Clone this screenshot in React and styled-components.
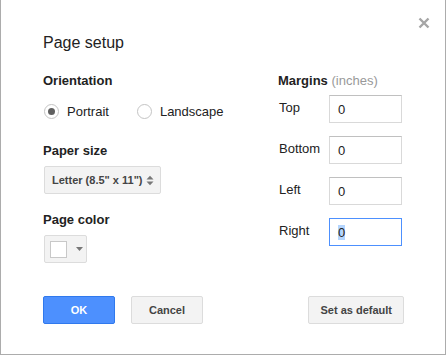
import React from "react";
import styled, { createGlobalStyle } from "styled-components";

const Global = createGlobalStyle`
  html, body { margin: 0; padding: 0; background: #ffffff; }
  body { font-family: "Liberation Sans", Arial, sans-serif; color: #222; }
`;

const Dialog = styled.div`
  position: relative;
  box-sizing: border-box;
  width: 446px;
  height: 355px;
  border: 1px solid #acacac;
  border-top: none;
  background: #fff;
  padding: 33px 41px 0 42px;
  display: flex;
  flex-direction: column;
`;

const Close = styled.button`
  position: absolute;
  top: 17px;
  left: 417px;
  width: 12px;
  height: 12px;
  padding: 0;
  border: none;
  background: transparent;
  display: flex;
  cursor: pointer;
`;

const Title = styled.h1`
  margin: 0;
  font-size: 16px;
  line-height: 20px;
  font-weight: normal;
  color: #222;
`;

const Columns = styled.div`
  display: flex;
  margin-top: 20px;
`;

const LeftCol = styled.div`
  width: 235px;
  display: flex;
  flex-direction: column;
`;

const RightCol = styled.div`
  flex: 1;
  display: flex;
  flex-direction: column;
`;

const Label = styled.div`
  font-size: 13px;
  line-height: 16px;
  font-weight: bold;
  color: #222;
  margin-top: ${(p) => p.$top || 0}px;
`;

const Hint = styled.span`
  font-weight: normal;
  color: #999;
`;

const RadioGroup = styled.div`
  display: flex;
  align-items: center;
  height: 18px;
  margin-top: 13px;
  margin-left: 1px;
  gap: 28px;
`;

const RadioOption = styled.label`
  display: flex;
  align-items: center;
  gap: 8px;
  font-size: 13px;
  color: #222;
`;

const RadioCircle = styled.span`
  box-sizing: border-box;
  width: 15px;
  height: 15px;
  border-radius: 50%;
  border: 1px solid #c4c4c4;
  background: #fff;
  display: flex;
  align-items: center;
  justify-content: center;
  &::after {
    content: "";
    width: 7px;
    height: 7px;
    border-radius: 50%;
    background: ${(p) => (p.$checked ? "#606060" : "transparent")};
  }
`;

const Select = styled.div`
  box-sizing: border-box;
  margin-top: 7px;
  margin-left: 1px;
  width: 117px;
  height: 28px;
  border: 1px solid #dcdcdc;
  border-radius: 2px;
  background: #f3f3f3;
  display: flex;
  align-items: center;
  padding: 0 6px 0 7px;
  justify-content: space-between;
  font-size: 11px;
  font-weight: bold;
  color: #444;
`;

const ColorButton = styled.div`
  box-sizing: border-box;
  margin-top: 7px;
  margin-left: 1px;
  width: 43px;
  height: 28px;
  border: 1px solid #dcdcdc;
  border-radius: 2px;
  background: #f3f3f3;
  display: flex;
  align-items: center;
  padding-left: 5px;
  gap: 9px;
`;

const Swatch = styled.span`
  box-sizing: border-box;
  width: 17px;
  height: 17px;
  border: 1px solid #c8c8c8;
  background: ${(p) => p.$color};
`;

const MarginRow = styled.div`
  display: flex;
  align-items: center;
  margin-top: ${(p) => p.$top}px;
`;

const MarginLabel = styled.div`
  width: 51px;
  font-size: 13px;
  line-height: 16px;
  color: #222;
  padding-left: 1px;
  margin-top: -2px;
`;

const Field = styled.div`
  box-sizing: border-box;
  width: 73px;
  height: 28px;
  margin-left: -1px;
  border: 1px solid ${(p) => (p.$focused ? "#4d90fe" : "#d9d9d9")};
  border-top-color: ${(p) => (p.$focused ? "#4d90fe" : "#c0c0c0")};
  background: #fff;
  display: flex;
  align-items: center;
  padding-left: 8px;
  font-size: 13px;
  color: #222;
`;

const Value = styled.span`
  line-height: 15px;
  background: ${(p) => (p.$selected ? "#b4d5fe" : "transparent")};
`;

const Footer = styled.div`
  display: flex;
  justify-content: space-between;
  margin-top: 33px;
`;

const ButtonGroup = styled.div`
  display: flex;
  gap: 16px;
`;

const Button = styled.button`
  box-sizing: border-box;
  height: 28px;
  min-width: 72px;
  padding: 0 11px;
  border-radius: 2px;
  font-family: "Liberation Sans", Arial, sans-serif;
  font-size: 11px;
  font-weight: bold;
  cursor: pointer;
  border: 1px solid ${(p) => (p.$primary ? "#3079ed" : "#dcdcdc")};
  background: ${(p) => (p.$primary ? "#4d90fe" : "#f3f3f3")};
  color: ${(p) => (p.$primary ? "#fff" : "#444")};
`;

const margins = [
  { name: "Top", top: 6 },
  { name: "Bottom", top: 13 },
  { name: "Left", top: 13 },
  { name: "Right", top: 13, focused: true },
];

export default function App() {
  return (
    <>
      <Global />
      <Dialog>
        <Close aria-label="Close">
          <svg width="12" height="12" viewBox="0 0 12 12">
            <path d="M1.5 1.5 L10.5 10.5 M10.5 1.5 L1.5 10.5" stroke="#a6a6a6" strokeWidth="2.4" />
          </svg>
        </Close>
        <Title>Page setup</Title>
        <Columns>
          <LeftCol>
            <Label>Orientation</Label>
            <RadioGroup>
              <RadioOption>
                <RadioCircle $checked />
                Portrait
              </RadioOption>
              <RadioOption>
                <RadioCircle />
                Landscape
              </RadioOption>
            </RadioGroup>
            <Label $top={23}>Paper size</Label>
            <Select>
              <span>Letter (8.5" x 11")</span>
              <svg width="8" height="11" viewBox="0 0 8 11">
                <path d="M0.5 4.5 L4 0.8 L7.5 4.5 Z M0.5 6.5 L4 10.2 L7.5 6.5 Z" fill="#777" />
              </svg>
            </Select>
            <Label $top={18}>Page color</Label>
            <ColorButton>
              <Swatch $color="#ffffff" />
              <svg width="7" height="4" viewBox="0 0 7 4">
                <path d="M0 0 L7 0 L3.5 4 Z" fill="#777" />
              </svg>
            </ColorButton>
          </LeftCol>
          <RightCol>
            <Label>
              Margins <Hint>(inches)</Hint>
            </Label>
            {margins.map((m) => (
              <MarginRow key={m.name} $top={m.top}>
                <MarginLabel>{m.name}</MarginLabel>
                <Field $focused={m.focused}>
                  <Value $selected={m.focused}>0</Value>
                </Field>
              </MarginRow>
            ))}
          </RightCol>
        </Columns>
        <Footer>
          <ButtonGroup>
            <Button $primary>OK</Button>
            <Button>Cancel</Button>
          </ButtonGroup>
          <Button>Set as default</Button>
        </Footer>
      </Dialog>
    </>
  );
}
